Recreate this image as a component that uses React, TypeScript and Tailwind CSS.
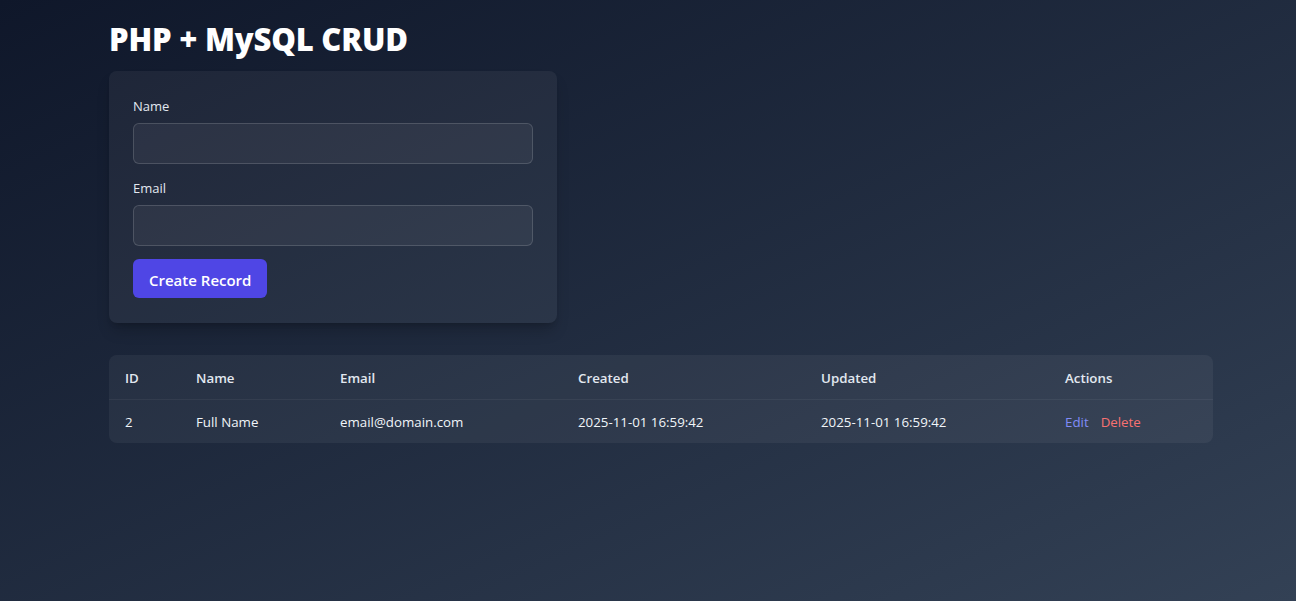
const rows = [
  {
    id: 2,
    name: "Full Name",
    email: "email@domain.com",
    created: "2025-11-01 16:59:42",
    updated: "2025-11-01 16:59:42",
  },
];

const App = () => {
  return (
    <div
      className="min-h-screen bg-gradient-to-br from-[#0f172a] to-[#334155] text-slate-100"
      style={{ fontFamily: '"Open Sans", "Noto Sans", sans-serif' }}
    >
      <div className="pl-[109px] pr-[83px] pt-[19px]">
        <h1 className="text-[31px] font-extrabold leading-[40px] text-white tracking-[-0.2px]">
          PHP + MySQL CRUD
        </h1>

        <form className="mt-[12px] w-[448px] rounded-lg bg-white/5 shadow-lg shadow-black/20 px-6 pt-[26px] pb-[25px]">
          <label className="block text-[13px] leading-[18px] text-slate-200">Name</label>
          <input
            type="text"
            className="mt-[8px] block h-[41px] w-full rounded-md border border-white/15 bg-white/5 px-3 outline-none"
          />
          <label className="mt-[15px] block text-[13px] leading-[18px] text-slate-200">Email</label>
          <input
            type="email"
            className="mt-[8px] block h-[41px] w-full rounded-md border border-white/15 bg-white/5 px-3 outline-none"
          />
          <button
            type="button"
            className="mt-[13px] h-[39px] rounded-md bg-[#4f46e5] px-4 pt-[3px] text-[15px] font-semibold text-white"
          >
            Create Record
          </button>
        </form>

        <div className="mt-[32px] overflow-hidden rounded-lg bg-white/5">
          <table className="w-full text-left text-[13.3px]">
            <thead>
              <tr className="h-[44px] border-b border-white/5 text-slate-200">
                <th className="w-[71px] px-4 pt-[4px] font-semibold">ID</th>
                <th className="w-[144px] px-4 pt-[4px] font-semibold">Name</th>
                <th className="w-[238px] px-4 pt-[4px] font-semibold">Email</th>
                <th className="w-[243px] px-4 pt-[4px] font-semibold">Created</th>
                <th className="w-[244px] px-4 pt-[4px] font-semibold">Updated</th>
                <th className="px-4 pt-[4px] font-semibold">Actions</th>
              </tr>
            </thead>
            <tbody>
              {rows.map((r) => (
                <tr key={r.id} className="h-[44px]">
                  <td className="px-4 pt-[4px]">{r.id}</td>
                  <td className="px-4 pt-[4px]">{r.name}</td>
                  <td className="px-4 pt-[4px]">{r.email}</td>
                  <td className="px-4 pt-[4px]">{r.created}</td>
                  <td className="px-4 pt-[4px]">{r.updated}</td>
                  <td className="px-4 pt-[4px]">
                    <a className="text-[#818cf8] cursor-pointer">Edit</a>
                    <a className="ml-3 text-[#f87171] cursor-pointer">Delete</a>
                  </td>
                </tr>
              ))}
            </tbody>
          </table>
        </div>
      </div>
    </div>
  );
};

export default App;
